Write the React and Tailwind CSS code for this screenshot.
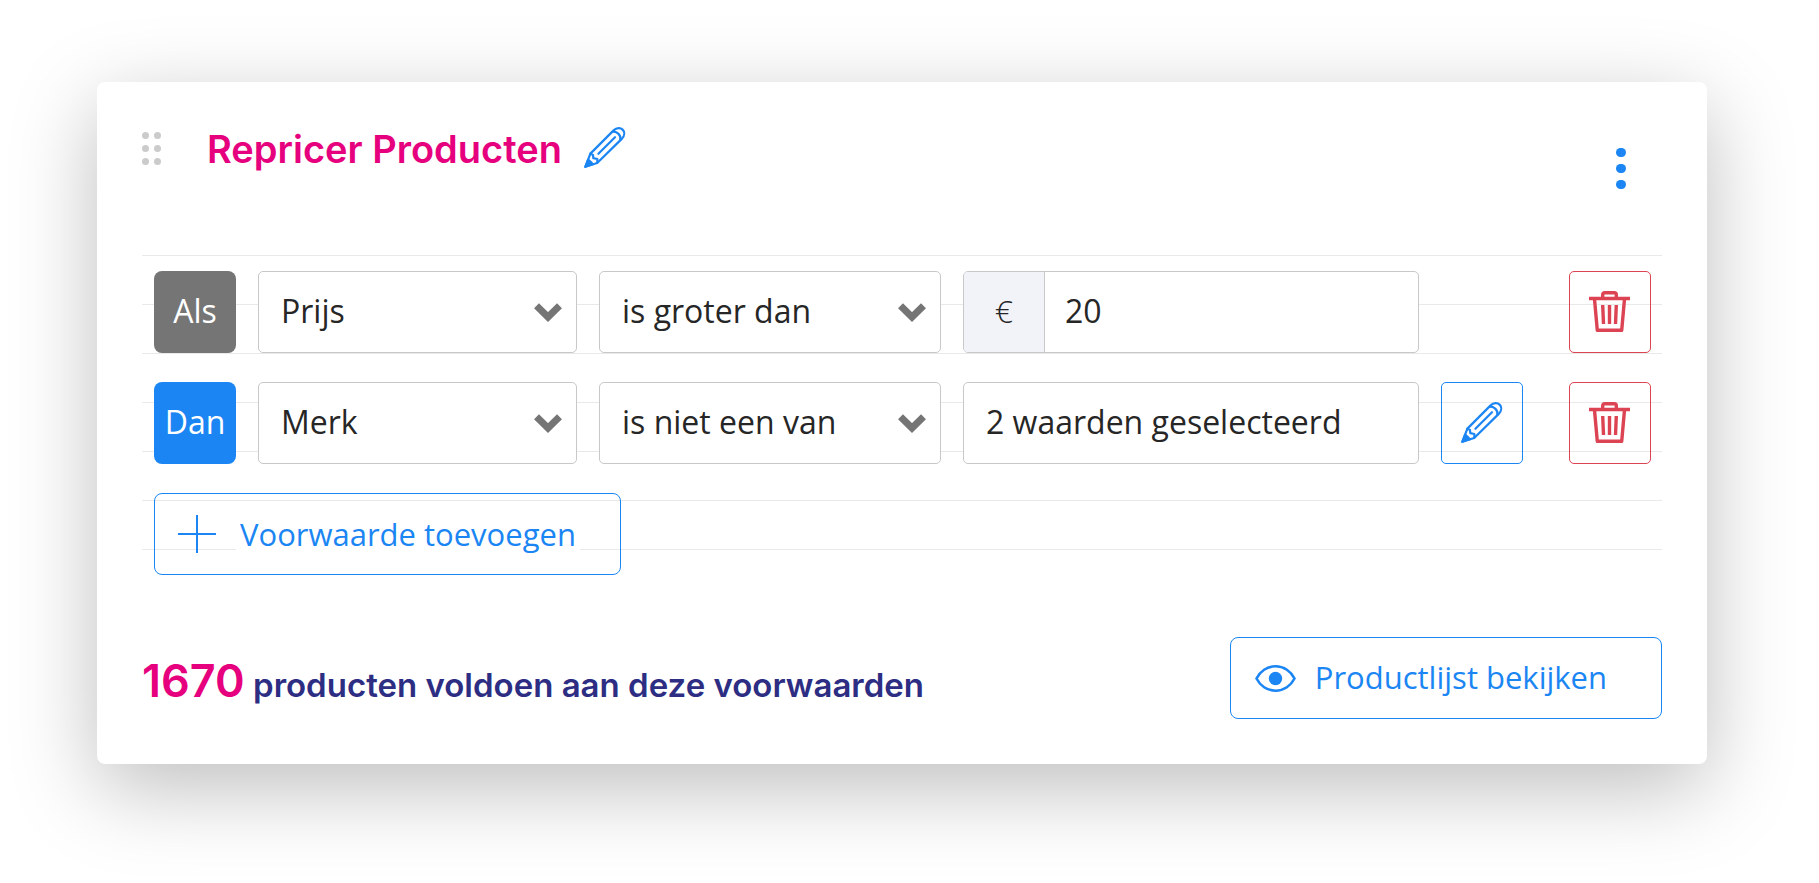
import React, { useState } from "react";

const PencilIcon = () => (
  <svg viewBox="0 0 42 42" className="w-[42px] h-[42px] shrink-0" fill="none" stroke="currentColor" strokeWidth="2.2" strokeLinejoin="round" strokeLinecap="round" aria-hidden="true">
    <path d="M1.300 39.800 6.400 26.600 29.600 3.400C32.800.4 36.600.6 38.600 2.600 40.800 4.800 40.800 8.600 38 11.600L13.200 36Z" />
    <path d="M6.400 26.600 9 28 9.300 31.200 13.400 32 13.200 36" />
    <path d="M28.600 4.800C33 4 37.400 8.400 36.300 13" />
    <path d="M14.400 26.800 31 10.200" />
    <path d="M1.300 39.800 4.100 32.600 6.600 34.800 8.800 37.300Z" fill="currentColor" />
  </svg>
);

const TrashIcon = () => (
  <svg viewBox="0 0 42 42" className="w-[42px] h-[42px] shrink-0" fill="none" stroke="currentColor" strokeWidth="3.4" aria-hidden="true">
    <path d="M0 7.500H41" />
    <path d="M13.700 7V3.700Q13.700 1.700 15.700 1.700H25.300Q27.300 1.700 27.300 3.700V7" />
    <path d="M5.500 8 8.300 39.300H32.700L35.500 8" strokeLinejoin="round" />
    <path d="M13.700 14 14.500 33M20.500 14V33M27.300 14 26.500 33" />
  </svg>
);

const EyeIcon = () => (
  <svg viewBox="0 0 41 27" className="w-[41px] h-[27px] shrink-0" fill="none" stroke="currentColor" strokeWidth="2.600" aria-hidden="true">
    <path d="M1.500 13.500C5 6.500 12 1.300 20.500 1.300S36 6.500 39.500 13.500C36 20.500 29 25.700 20.500 25.700S5 20.500 1.500 13.500Z" />
    <circle cx="20.500" cy="13.500" r="6.700" fill="currentColor" stroke="none" />
  </svg>
);

const PlusIcon = () => (
  <svg viewBox="0 0 38 38" className="w-[38px] h-[38px] shrink-0" fill="none" stroke="currentColor" strokeWidth="2" aria-hidden="true">
    <path d="M19 0V38M0 19H38" />
  </svg>
);

const ChevronIcon = () => (
  <svg viewBox="0 0 28 19" className="w-7 h-[19px] col-start-1 row-start-1 justify-self-end mr-[15px] pointer-events-none text-[#757575]" fill="none" stroke="currentColor" strokeWidth="7" aria-hidden="true">
    <path d="M2.500 2.700 14 14 25.500 2.700" />
  </svg>
);

//drop-down with own chevron
const SelectBox = ({ label, options }) => {
  const [value, setValue] = useState(options[0]);

  return (
    <div className="grid items-center min-w-0">
      <select
        aria-label={label}
        value={value}
        onChange={(e) => setValue(e.target.value)}
        className="col-start-1 row-start-1 appearance-none w-full h-[82px] pl-[22px] pr-14 pb-0.5 rounded-[5px] border border-[#c8c8c8] bg-white text-[#262626]"
      >
        {options.map((option) => (
          <option key={option}>{option}</option>
        ))}
      </select>
      <ChevronIcon />
    </div>
  );
};

const DeleteButton = () => (
  <button
    type="button"
    aria-label="Verwijderen"
    className="col-start-6 justify-self-end flex items-center justify-center w-[82px] h-[82px] rounded-[5px] border border-[#dc4453] text-[#dc4453] cursor-pointer"
  >
    <TrashIcon />
  </button>
);

const App = () => {
  const [price, setPrice] = useState("20");

  return (
    <div className="bg-white pl-[97px] pr-28 pt-[82px] pb-[119px] font-['Open_Sans','Noto_Sans',sans-serif] text-[32px] leading-[44px]">
      <div className="bg-white rounded-lg p-[45px] shadow-[0_24px_85px_rgba(0,0,0,0.26)]">
        {/* Header */}
        <div className="flex items-start justify-between h-32">
          <div className="flex items-center">
            <div className="grid grid-cols-2 gap-x-[5px] gap-y-1.5 mr-[46px]">
              {[1, 2, 3, 4, 5, 6].map((dot) => (
                <span key={dot} className="w-[7px] h-[7px] rounded-full bg-[#cbcbcb]" />
              ))}
            </div>
            <h1 className="pt-0.5 font-['Inter',sans-serif] font-semibold text-[38px] leading-[40px] text-[#e6007e]">
              Repricer Producten
            </h1>
            <button type="button" aria-label="Naam wijzigen" className="ml-[22px] text-[#1b86f3] cursor-pointer">
              <PencilIcon />
            </button>
          </div>
          <button type="button" aria-label="Menu" className="flex flex-col gap-[7px] mt-[21px] mr-9 cursor-pointer">
            <span className="w-[10px] h-[9px] rounded-full bg-[#1b86f3]" />
            <span className="w-[10px] h-[9px] rounded-full bg-[#1b86f3]" />
            <span className="w-[10px] h-[9px] rounded-full bg-[#1b86f3]" />
          </button>
        </div>

        {/* Conditions, ruled lines behind the rows */}
        <div className="flex flex-col gap-[29px] pt-4 pl-3 pr-[11px] bg-[linear-gradient(to_bottom,#e9e9e9_1px,transparent_1px)] bg-[length:100%_49px]">
          <div className="grid grid-cols-[82px_319fr_342fr_456fr_82px_106px] gap-x-[22px]">
            <div className="flex items-center justify-center h-[82px] pb-0.5 rounded-lg bg-[#757575] text-white">Als</div>
            <SelectBox label="Veld" options={["Prijs", "Merk"]} />
            <SelectBox label="Vergelijking" options={["is groter dan", "is kleiner dan"]} />
            <div className="flex h-[82px] rounded-[5px] border border-[#c8c8c8] bg-white overflow-hidden">
              <label htmlFor="price" className="flex items-center justify-center w-[81px] shrink-0 pb-0.5 border-r border-[#c8c8c8] bg-[#f1f3f8] font-light text-[#262626]">
                €
              </label>
              <input
                id="price"
                type="text"
                value={price}
                onChange={(e) => setPrice(e.target.value)}
                className="w-full min-w-0 pl-5 pb-0.5 outline-none text-[#262626]"
              />
            </div>
            <DeleteButton />
          </div>

          <div className="grid grid-cols-[82px_319fr_342fr_456fr_82px_106px] gap-x-[22px]">
            <div className="flex items-center justify-center h-[82px] pb-0.5 rounded-lg bg-[#1b86f3] text-white">Dan</div>
            <SelectBox label="Veld" options={["Merk", "Prijs"]} />
            <SelectBox label="Vergelijking" options={["is niet een van", "is een van"]} />
            <input
              type="text"
              readOnly
              aria-label="Waarden"
              value="2 waarden geselecteerd"
              className="w-full min-w-0 h-[82px] px-[22px] pb-1 rounded-[5px] border border-[#c8c8c8] bg-white text-[#262626] outline-none"
            />
            <button
              type="button"
              aria-label="Waarden wijzigen"
              className="flex items-center justify-center h-[82px] rounded-[5px] border border-[#1b86f3] text-[#1b86f3] cursor-pointer"
            >
              <PencilIcon />
            </button>
            <DeleteButton />
          </div>

          <button
            type="button"
            className="self-start flex items-center gap-5 h-[82px] pl-[23px] pr-10 rounded-lg border border-[#1b86f3] text-[31px] text-[#1b86f3] cursor-pointer"
          >
            <PlusIcon />
            <span className="bg-white px-1">Voorwaarde toevoegen</span>
          </button>
        </div>

        {/* Footer */}
        <div className="flex items-end justify-between mt-[62px]">
          <p className="pb-3 font-['Inter',sans-serif] font-semibold text-[33px] text-[#2d2e83]">
            <span className="text-[45px] text-[#e6007e]">1670</span> producten voldoen aan deze voorwaarden
          </p>
          <button
            type="button"
            className="flex items-center gap-[19px] h-[82px] pl-6 pr-[54px] rounded-lg border border-[#1b86f3] text-[31px] text-[#1b86f3] cursor-pointer"
          >
            <EyeIcon />
            <span className="mb-0.5">Productlijst bekijken</span>
          </button>
        </div>
      </div>
    </div>
  );
};

export default App;
